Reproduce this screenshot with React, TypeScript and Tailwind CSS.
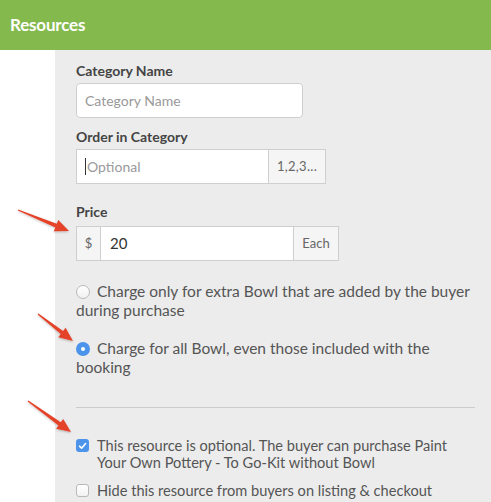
import React from "react";

const font = { fontFamily: "Lato, 'Open Sans', sans-serif" };

type Pt = [number, number];

function arrowPoints(tail: Pt, tip: Pt) {
  const [x1, y1] = tail;
  const [x2, y2] = tip;
  const len = Math.hypot(x2 - x1, y2 - y1);
  const ux = (x2 - x1) / len;
  const uy = (y2 - y1) / len;
  const nx = -uy;
  const ny = ux;
  const headLen = 14;
  const headW = 6;
  const bx = x2 - ux * headLen;
  const by = y2 - uy * headLen;
  const pts: Pt[] = [
    [x1 + nx * 0.6, y1 + ny * 0.6],
    [bx + nx * 2, by + ny * 2],
    [bx + nx * headW, by + ny * headW],
    [x2, y2],
    [bx - nx * headW, by - ny * headW],
    [bx - nx * 2, by - ny * 2],
    [x1 - nx * 0.6, y1 - ny * 0.6],
  ];
  return pts.map((p) => p.map((v) => v.toFixed(1)).join(",")).join(" ");
}

const arrows: [Pt, Pt][] = [
  [[18, 210], [69, 231]],
  [[38, 314], [73, 341]],
  [[28, 401], [71, 432]],
];

function Radio({ checked }: { checked?: boolean }) {
  if (checked) {
    return (
      <span className="flex h-[14px] w-[14px] shrink-0 items-center justify-center rounded-full bg-[#4c93ec]">
        <span className="block h-[4px] w-[4px] rounded-full bg-white" />
      </span>
    );
  }
  return (
    <span className="block h-[14px] w-[14px] shrink-0 rounded-full border border-[#b9b9b9] bg-gradient-to-b from-white to-[#f1f1f1]" />
  );
}

function Check({ checked }: { checked?: boolean }) {
  if (checked) {
    return (
      <span className="mt-[1px] flex h-[13px] w-[13px] shrink-0 items-center justify-center rounded-[3px] bg-[#4c93ec]">
        <svg width="9" height="8" viewBox="0 0 9 8">
          <path d="M1.5 4.2 L3.6 6.2 L7.6 1.5" fill="none" stroke="white" strokeWidth="1.6" strokeLinecap="round" strokeLinejoin="round" />
        </svg>
      </span>
    );
  }
  return (
    <span className="mt-[3px] block h-[13px] w-[13px] shrink-0 rounded-[3px] border border-[#b9b9b9] bg-gradient-to-b from-white to-[#f3f3f3]" />
  );
}

export default function App() {
  return (
    <div className="relative h-[502px] w-[491px] overflow-hidden bg-white text-[#555]" style={font}>
      <div className="flex h-[50px] items-center bg-[#84b94d] px-[10px]">
        <span className="text-[17px] font-bold tracking-[-0.2px] text-white">Resources</span>
      </div>

      <div className="flex h-[452px]">
        <div className="w-[55px] shrink-0 bg-white" />
        <div className="flex-1 bg-[#ececec] pl-[21px] pr-[16px] pt-[12px]">
          <div className="mb-[3px] text-[14px] font-bold leading-[18px] text-[#444]">Category Name</div>
          <div className="flex h-[35px] w-[227px] items-center rounded-[4px] border border-[#cfcfcf] bg-white px-[8px] text-[14px] text-[#999]">
            Category Name
          </div>

          <div className="mb-[3px] mt-[10px] text-[14px] font-bold leading-[18px] text-[#444]">Order in Category</div>
          <div className="flex h-[35px] w-[250px] border border-[#cfcfcf] bg-white">
            <div className="flex flex-1 items-center px-[8px] text-[14px] text-[#999]">
              <span className="mr-px h-[17px] w-px bg-[#333]" />
              Optional
            </div>
            <div className="flex w-[57px] items-center justify-center border-l border-[#cfcfcf] bg-[#f5f5f5] text-[13px] tracking-[0.3px] text-[#666]">
              1,2,3...
            </div>
          </div>

          <div className="mb-[5px] mt-[19px] text-[14px] font-bold leading-[18px] text-[#444]">Price</div>
          <div className="flex h-[35px] w-[263px] border border-[#cfcfcf] bg-white">
            <div className="flex w-[24px] items-center justify-center border-r border-[#cfcfcf] bg-[#f5f5f5] text-[13px] text-[#666]">
              $
            </div>
            <div className="flex flex-1 items-center px-[9px] text-[15px] text-[#333]">20</div>
            <div className="flex w-[45px] items-center justify-center border-l border-[#cfcfcf] bg-[#f5f5f5] text-[13px] text-[#666]">
              Each
            </div>
          </div>

          <div className="mt-[21px] flex flex-col gap-[19px] text-[15.5px] leading-[19px]">
            <div className="relative pl-[21px]">
              <span className="absolute left-0 top-[3px]"><Radio /></span>
              Charge only for extra Bowl that are added by the buyer
              <span className="-ml-[21px] block">during purchase</span>
            </div>
            <div className="relative pl-[21px]">
              <span className="absolute left-0 top-[3px]"><Radio checked /></span>
              Charge for all Bowl, even those included with the
              <span className="-ml-[21px] block">booking</span>
            </div>
          </div>

          <div className="mt-[30px] h-px w-[399px] bg-[#cccccc]" />

          <div className="mt-[30px] flex gap-[8px] text-[14.6px] leading-[16.5px]">
            <Check checked />
            <span>
              This resource is optional. The buyer can purchase Paint
              <br />
              Your Own Pottery - To Go-Kit without Bowl
            </span>
          </div>
          <div className="mt-[10px] flex gap-[8px] text-[14.6px] leading-[19px]">
            <Check />
            <span>Hide this resource from buyers on listing &amp; checkout</span>
          </div>
        </div>
      </div>

      <svg className="pointer-events-none absolute left-0 top-0" width="491" height="502">
        <defs>
          <filter id="sh" x="-20%" y="-20%" width="140%" height="140%">
            <feDropShadow dx="0" dy="1" stdDeviation="1" floodColor="#000" floodOpacity="0.25" />
          </filter>
        </defs>
        {arrows.map(([a, b], i) => (
          <polygon key={i} points={arrowPoints(a, b)} fill="#e5432a" filter="url(#sh)" />
        ))}
      </svg>
    </div>
  );
}
